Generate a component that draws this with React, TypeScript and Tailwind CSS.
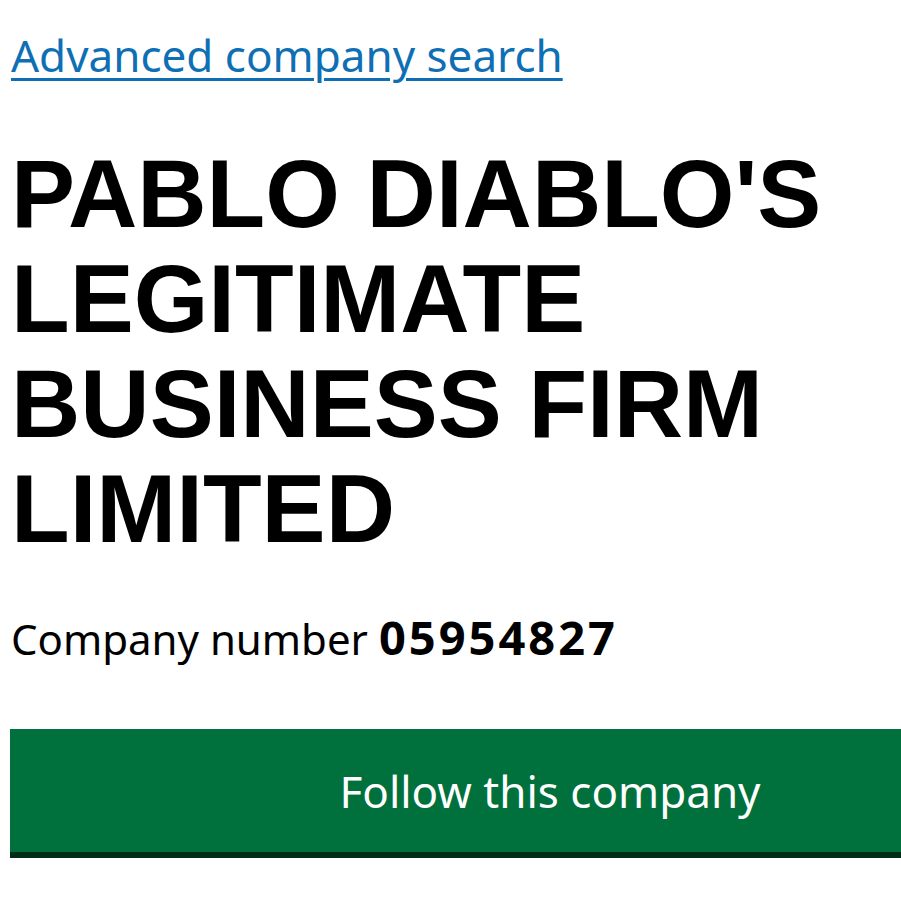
import React from 'react';

const App: React.FC = () => {
  return (
    <div className="w-[901px] h-[901px] overflow-hidden bg-white text-[#0b0c0c]">
      <div className="pl-[11px] pt-[27px]" style={{ fontFamily: '"Noto Sans", sans-serif' }}>
        <a
          href="#"
          className="text-[44px] leading-[56px] text-[#0f6fb4] underline decoration-[3px] underline-offset-[6px]"
        >
          Advanced company search
        </a>
      </div>

      <h1
        className="mt-[58px] pl-[11px] text-[96px] leading-[105px] font-bold uppercase text-black"
        style={{ fontFamily: '"Liberation Sans", Arial, sans-serif' }}
      >
        Pablo Diablo's
        <br />
        Legitimate
        <br />
        Business Firm
        <br />
        Limited
      </h1>

      <p className="mt-[50px] pl-[11px] text-[42px] leading-[52px] text-black" style={{ fontFamily: '"Noto Sans", sans-serif' }}>
        Company number <strong className="font-bold text-[47px] tracking-[3px]">05954827</strong>
      </p>

      <div className="mt-[64px] pl-[10px]">
        <button
          type="button"
          className="w-[1080px] h-[123px] bg-[#00703c] text-white text-[44px] shadow-[0_6px_0_#002d18] flex items-center justify-center"
          style={{ fontFamily: '"Noto Sans", sans-serif' }}
        >
          Follow this company
        </button>
      </div>
    </div>
  );
};

export default App;
